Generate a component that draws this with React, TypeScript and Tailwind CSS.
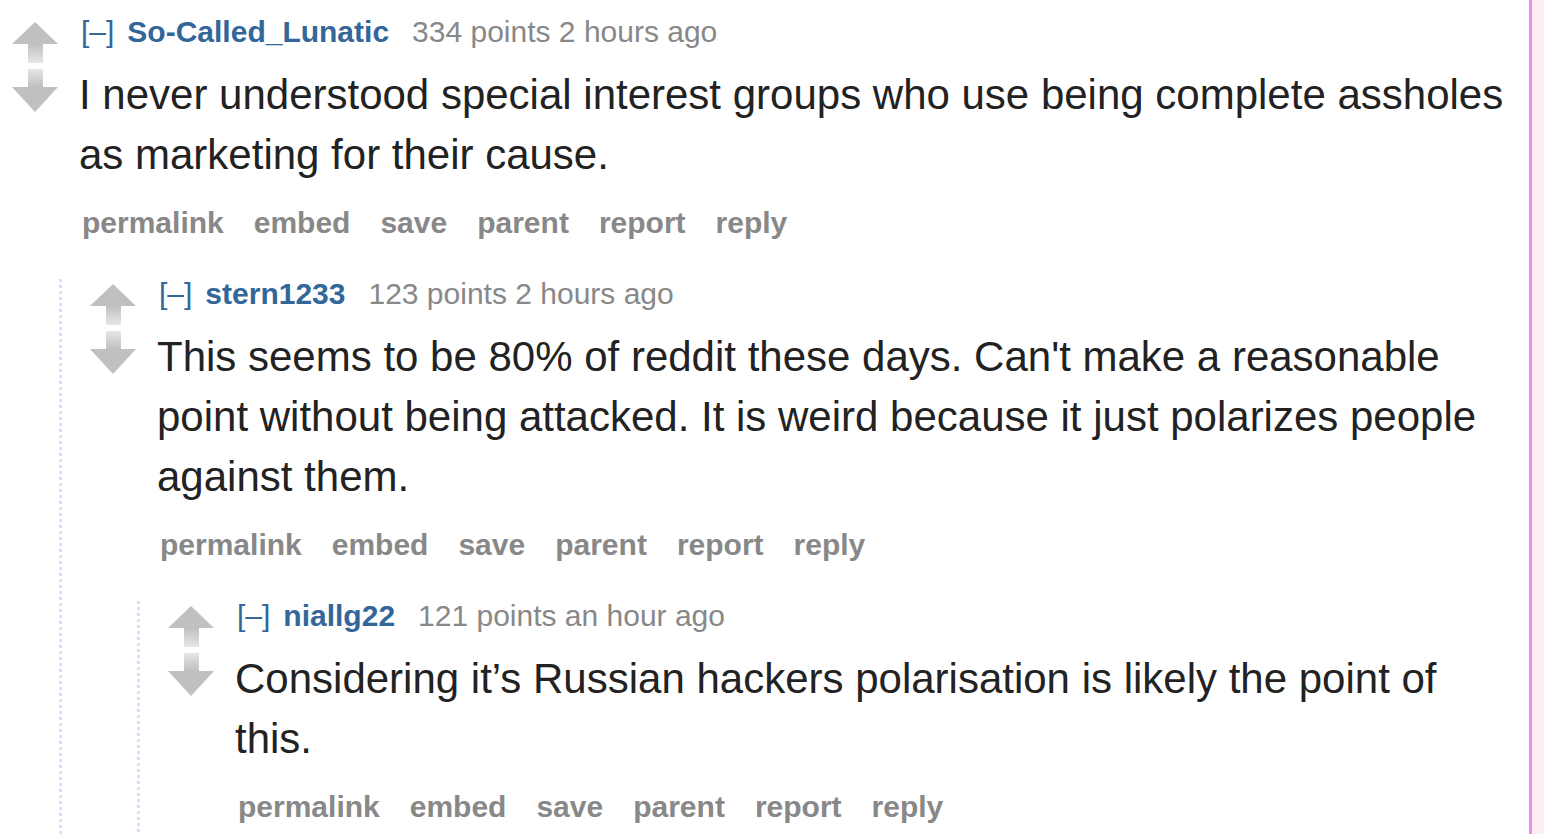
import React from "react";

type C = {
  user: string;
  meta: string;
  lines: string;
  children?: C[];
};

const data: C = {
  user: "So-Called_Lunatic",
  meta: "334 points 2 hours ago",
  lines:
    "I never understood special interest groups who use being complete assholes as marketing for their cause.",
  children: [
    {
      user: "stern1233",
      meta: "123 points 2 hours ago",
      lines:
        "This seems to be 80% of reddit these days. Can't make a reasonable point without being attacked. It is weird because it just polarizes people against them.",
      children: [
        {
          user: "niallg22",
          meta: "121 points an hour ago",
          lines:
            "Considering it\u2019s Russian hackers polarisation is likely the point of this.",
        },
      ],
    },
  ],
};

function Arrows() {
  return (
    <svg width="46" height="90" viewBox="0 0 46 90" className="block shrink-0">
      <defs>
        <linearGradient id="gu" x1="0" y1="0" x2="0" y2="1">
          <stop offset="0" stopColor="#c0c0c0" />
          <stop offset="1" stopColor="#e6e6e6" />
        </linearGradient>
        <linearGradient id="gd" x1="0" y1="0" x2="0" y2="1">
          <stop offset="0" stopColor="#e6e6e6" />
          <stop offset="1" stopColor="#c0c0c0" />
        </linearGradient>
      </defs>
      <polygon points="23,0 46,22 0,22" fill="#c0c0c0" />
      <rect x="16" y="22" width="15" height="19" fill="url(#gu)" />
      <rect x="16" y="47" width="15" height="18" fill="url(#gd)" />
      <polygon points="0,65 46,65 23,90" fill="#c0c0c0" />
    </svg>
  );
}

function Comment({ c }: { c: C }) {
  return (
    <div className="flex items-start">
      <div className="ml-[12px] mt-[5px] shrink-0">
        <Arrows />
      </div>
      <div className="ml-[21px] flex-1 min-w-0">
        <div className="flex items-baseline text-[30px] leading-[30px] h-[30px] whitespace-nowrap">
          <span className="text-[#336699] ml-[2px]">[–]</span>
          <span className="text-[#336699] font-bold ml-[13px]">{c.user}</span>
          <span className="text-[#888888] ml-[23px]">{c.meta}</span>
        </div>
        <div className="mt-[18px] text-[42px] leading-[60px] text-[#222222]">
          {c.lines}
        </div>
        <div className="mt-[23px] mb-[41px] flex gap-[30px] text-[30px] leading-[30px] font-bold text-[#888888] pl-[3px]">
          <span>permalink</span>
          <span>embed</span>
          <span>save</span>
          <span>parent</span>
          <span>report</span>
          <span>reply</span>
        </div>
        {c.children && c.children.length > 0 && (
          <div className="-ml-[20px] pl-[19px] bg-[linear-gradient(to_bottom,#dcdcff_50%,transparent_50%)] bg-size-[3px_6px] bg-repeat-y bg-left-top pb-[40px]">
            {c.children.map((ch, i) => (
              <Comment key={i} c={ch} />
            ))}
          </div>
        )}
      </div>
    </div>
  );
}

export default function App() {
  return (
    <div
      className="flex h-[834px] w-full overflow-hidden bg-white"
      style={{ fontFamily: '"Liberation Sans", Arial, sans-serif' }}
    >
      <div className="flex-1 min-w-0 pt-[17px] pr-[17px]">
        <Comment c={data} />
      </div>
      <div className="w-[3px] shrink-0 bg-[#f08af0]" />
      <div className="w-[12px] shrink-0 bg-[#fdeef0]" />
    </div>
  );
}
